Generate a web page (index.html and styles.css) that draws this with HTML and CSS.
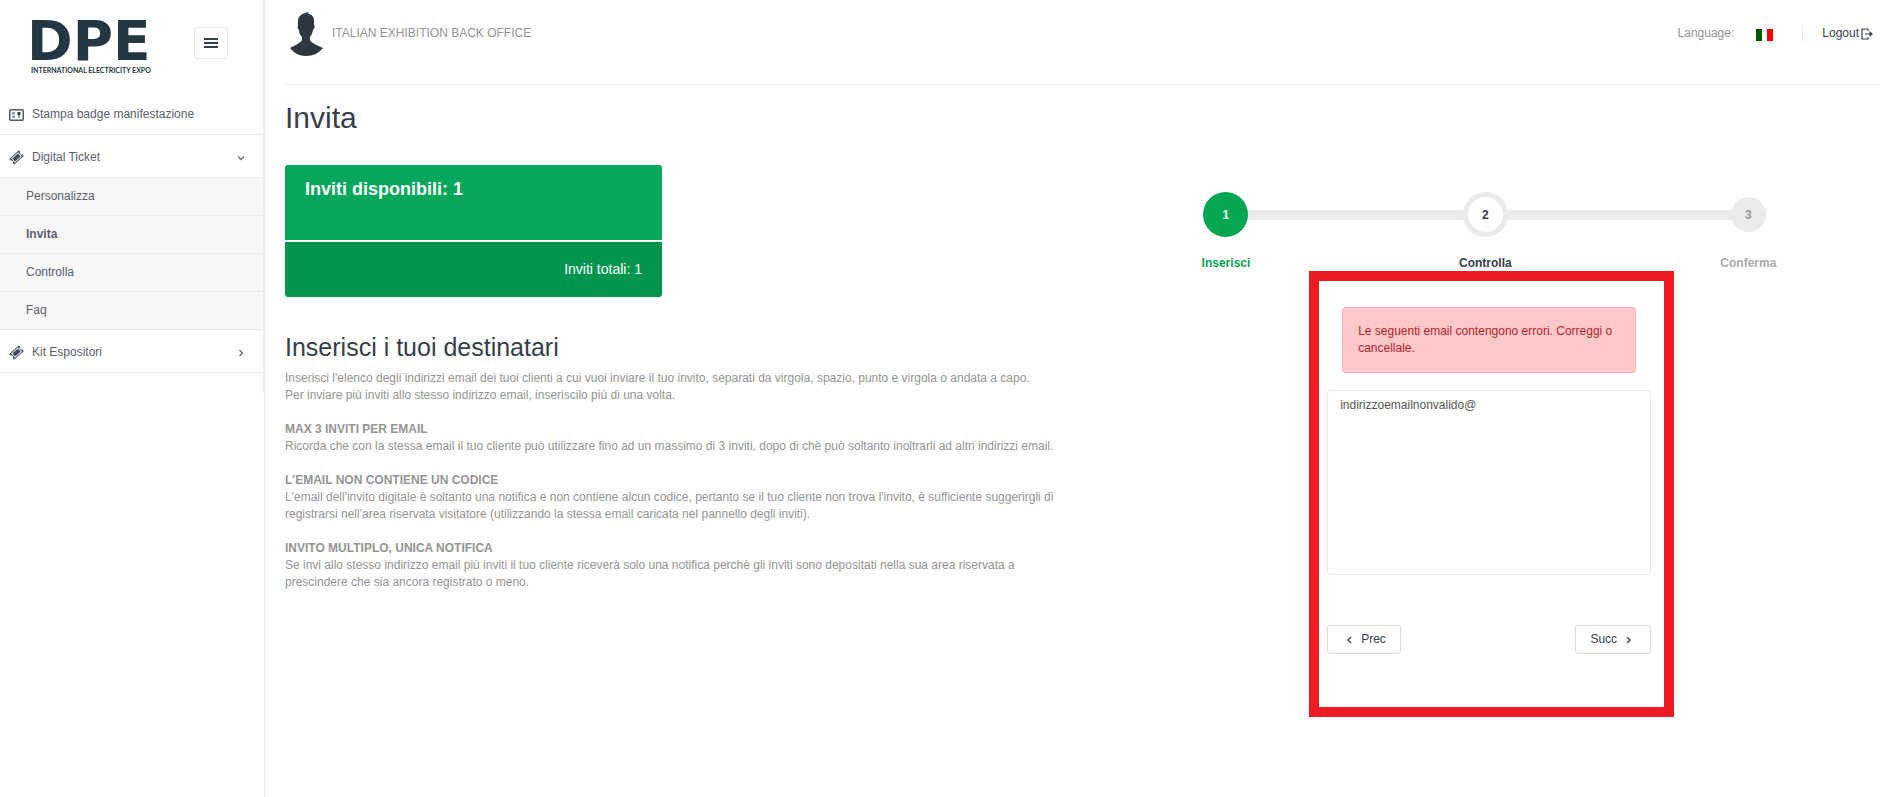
FILE: index.html
```html
<!DOCTYPE html>
<html lang="it">
<head>
  <meta charset="UTF-8">
  <meta name="viewport" content="width=device-width, initial-scale=1">
  <title>Invita</title>
  <link rel="stylesheet" href="styles.css">
</head>
<body>
  <aside class="sidebar">
    <div class="sidebar-inner">
      <div class="sidebar-header">
        <a href="#" class="logo">
          <span class="logo-name">DPE</span>
          <span class="logo-sub">INTERNATIONAL ELECTRICITY EXPO</span>
        </a>
        <button type="button" class="menu-toggle" aria-label="Menu">
          <svg width="14" height="11" viewBox="0 0 14 11"><path d="M0 1h14M0 5h14M0 9h14" stroke="#373e4a" stroke-width="2"/></svg>
        </button>
      </div>
      <nav>
        <ul class="menu">
          <li>
            <a href="#">
              <svg class="icon" width="15" height="12" viewBox="0 0 15 12">
                <rect x="0.750" y="0.750" width="13.500" height="10.500" rx="1" fill="none" stroke="#555a64" stroke-width="1.500"/>
                <path d="M3 3h3v2.500H3zM3 6.500h3V9H3z" fill="#9a9ea6"/>
                <path d="M8.500 3h3v3h-1v3h-1V6h-1z" fill="#373e4a"/>
              </svg>
              <span>Stampa badge manifestazione</span>
            </a>
          </li>
          <li>
            <a href="#">
              <svg class="icon" width="15" height="15" viewBox="0 0 16 16">
                <g transform="rotate(-42 8 8)">
                  <path d="M1 4h14v2.500a1.500 1.500 0 0 0 0 3V12H1V9.500a1.500 1.500 0 0 0 0-3z" fill="#555a64"/>
                  <rect x="3.500" y="5.500" width="9" height="5" fill="#444a55" stroke="#e6e7e9" stroke-width="1"/>
                </g>
              </svg>
              <span>Digital Ticket</span>
              <svg class="arrow" width="8" height="8" viewBox="0 0 8 8"><path d="M1 2.500l3 3 3-3" fill="none" stroke="#6b707a" stroke-width="1.300"/></svg>
            </a>
            <ul class="submenu">
              <li><a href="#">Personalizza</a></li>
              <li><a href="#" class="active">Invita</a></li>
              <li><a href="#">Controlla</a></li>
              <li><a href="#">Faq</a></li>
            </ul>
          </li>
          <li>
            <a href="#">
              <svg class="icon" width="15" height="15" viewBox="0 0 16 16">
                <g transform="rotate(-42 8 8)">
                  <path d="M1 4h14v2.500a1.500 1.500 0 0 0 0 3V12H1V9.500a1.500 1.500 0 0 0 0-3z" fill="#555a64"/>
                  <rect x="3.500" y="5.500" width="9" height="5" fill="#444a55" stroke="#e6e7e9" stroke-width="1"/>
                </g>
              </svg>
              <span>Kit Espositori</span>
              <svg class="arrow" width="8" height="8" viewBox="0 0 8 8"><path d="M2.500 1l3 3-3 3" fill="none" stroke="#6b707a" stroke-width="1.300"/></svg>
            </a>
          </li>
        </ul>
      </nav>
    </div>
  </aside>

  <main class="main">
    <header class="topbar">
      <div class="user">
        <svg width="33" height="44" viewBox="0 0 33 44">
          <path d="M19 0l-1 2c4 0 6 3 6 7v4c1 0 1 3-1 5-1 4-2 6-3 7v3c1 3 7 5 13 8-4 5-10 8-17 8S4 41 0 36c5-3 11-5 12-8v-3c-1-1-3-3-3-7-2-2-1-5-1-5V9c0-5 4-8 11-9z" fill="#303641"/>
        </svg>
        <span>ITALIAN EXHIBITION BACK OFFICE</span>
      </div>
      <div class="links">
        <span class="lang">Language:</span>
        <a href="#" class="flag" aria-label="Italiano">
          <svg width="17" height="12" viewBox="0 0 17 12"><path d="M0 0h6v12H0z" fill="#005700"/><path d="M11 0h6v12h-6z" fill="#fc0000"/></svg>
        </a>
        <a href="#" class="logout">Logout
          <svg width="12" height="12" viewBox="0 0 12 12"><path d="M7 3V1H1v10h6V9M4 6h6" fill="none" stroke="#373e4a" stroke-width="1.200"/><path d="M8.500 3L12 6 8.500 9z" fill="#373e4a"/></svg>
        </a>
      </div>
    </header>

    <h1>Invita</h1>

    <div class="columns">
      <section>
        <div class="stats">
          <div class="available">Inviti disponibili: 1</div>
          <div class="total">Inviti totali: 1</div>
        </div>

        <h2>Inserisci i tuoi destinatari</h2>
        <p>Inserisci l'elenco degli indirizzi email dei tuoi clienti a cui vuoi inviare il tuo invito, separati da virgola, spazio, punto e virgola o andata a capo.<br>
          Per inviare più inviti allo stesso indirizzo email, inseriscilo più di una volta.</p>
        <p><strong>MAX 3 INVITI PER EMAIL</strong><br>
          Ricorda che con la stessa email il tuo cliente può utilizzare fino ad un massimo di 3 inviti, dopo di chè può soltanto inoltrarli ad altri indirizzi email.</p>
        <p><strong>L'EMAIL NON CONTIENE UN CODICE</strong><br>
          L'email dell'invito digitale è soltanto una notifica e non contiene alcun codice, pertanto se il tuo cliente non trova l'invito, è sufficiente suggerirgli di registrarsi nell'area riservata visitatore (utilizzando la stessa email caricata nel pannello degli inviti).</p>
        <p><strong>INVITO MULTIPLO, UNICA NOTIFICA</strong><br>
          Se invi allo stesso indirizzo email più inviti il tuo cliente riceverà solo una notifica perchè gli inviti sono depositati nella sua area riservata a prescindere che sia ancora registrato o meno.</p>
      </section>

      <section class="wizard">
        <ol class="steps">
          <li class="completed"><span>1</span>Inserisci</li>
          <li class="current"><span>2</span>Controlla</li>
          <li><span>3</span>Conferma</li>
        </ol>

        <form class="panel">
          <div class="alert" role="alert">Le seguenti email contengono errori. Correggi o cancellale.</div>
          <textarea aria-label="Email" spellcheck="false">indirizzoemailnonvalido@</textarea>
          <div class="pager">
            <button type="button">
              <svg width="14" height="8" viewBox="0 0 14 8"><path d="M9 1L6 4l3 3" fill="none" stroke="#4a505b" stroke-width="1.500"/></svg>
              Prec
            </button>
            <button type="button">
              Succ
              <svg width="14" height="8" viewBox="0 0 14 8"><path d="M5 1l3 3-3 3" fill="none" stroke="#4a505b" stroke-width="1.500"/></svg>
            </button>
          </div>
        </form>
      </section>
    </div>
  </main>
</body>
</html>
```
FILE: styles.css
```css
* {
  box-sizing: border-box;
}
body {
  display: flex;
  min-height: 100vh;
  margin: 0;
  font-family: Arial, "Liberation Sans", sans-serif;
  font-size: 12px;
  line-height: 17px;
  color: #949494;
  background: #fff;
}
a {
  color: #5b606b;
  text-decoration: none;
}
ul, ol {
  margin: 0;
  padding: 0;
  list-style: none;
}
svg {
  flex: none;
}

/* sidebar */
.sidebar {
  flex: none;
  width: 265px;
  border-right: 1px solid #ebebeb;
}
.sidebar-inner {
  padding-bottom: 20px;
  border-right: 1px solid #ebebeb;
}
.sidebar-header {
  display: flex;
  justify-content: space-between;
  align-items: flex-start;
  height: 92px;
  padding: 16px 35px 0 31px;
}
.logo {
  display: flex;
  flex-direction: column;
  width: 116px;
  color: #233743;
}
.logo-name {
  margin-left: -4px;
  font-family: "DejaVu Sans", sans-serif;
  font-size: 55px;
  line-height: 50px;
  font-weight: bold;
}
.logo-sub {
  font-family: Lato, sans-serif;
  font-size: 7px;
  line-height: 8px;
  font-weight: bold;
  white-space: nowrap;
}
.menu-toggle {
  display: flex;
  align-items: center;
  justify-content: center;
  width: 34px;
  height: 32px;
  margin-top: 11px;
  padding: 0;
  border: 1px solid #ebebeb;
  border-radius: 3px;
  background: #fff;
}
.menu > li > a {
  display: flex;
  align-items: center;
  gap: 8px;
  height: 43px;
  padding: 3px 18px 0 9px;
  border-bottom: 1px solid #ebebeb;
}
.arrow {
  margin-left: auto;
}
.submenu a {
  display: flex;
  align-items: center;
  height: 38px;
  padding-left: 26px;
  border-bottom: 1px solid #ebebeb;
  background: #f7f7f7;
}
.submenu .active {
  font-weight: bold;
}

/* content */
.main {
  flex: 1;
  min-width: 0;
  padding: 0 5px 0 20px;
}
.topbar {
  display: flex;
  justify-content: space-between;
  align-items: flex-start;
  height: 85px;
  padding: 12px 7px 0 5px;
  border-bottom: 1px solid #efefef;
}
.user {
  display: flex;
  gap: 9px;
}
.user span {
  padding-top: 13px;
}
.links {
  display: flex;
  align-items: center;
  padding-top: 13px;
}
.flag {
  display: flex;
  margin: 2px 29px 0 22px;
}
.logout {
  display: flex;
  align-items: center;
  gap: 2px;
  padding-left: 19px;
  border-left: 1px solid #ebebeb;
  color: #373e4a;
}
h1, h2 {
  margin: 0;
  font-weight: normal;
  color: #373e4a;
}
h1 {
  padding: 16px 0 30px;
  font-size: 30px;
  line-height: 34px;
}
h2 {
  margin: 35px 0 8px;
  font-size: 25px;
  line-height: 30px;
}
p {
  margin: 0 0 17px;
}
.columns {
  display: grid;
  grid-template-columns: 775fr 783fr;
  gap: 39px;
}

/* invitation counters */
.stats {
  display: flex;
  flex-direction: column;
  gap: 2px;
  max-width: 377px;
  color: #fff;
}
.available {
  height: 75px;
  padding: 14px 20px;
  border-radius: 3px 3px 0 0;
  background: #04a75b;
  font-size: 18px;
  line-height: 20px;
  font-weight: bold;
}
.total {
  padding: 17px 20px 18px;
  border-radius: 0 0 3px 3px;
  background: #00954f;
  font-size: 14px;
  line-height: 20px;
  text-align: right;
}

/* wizard */
.wizard {
  padding-top: 27px;
}
.steps {
  display: flex;
  justify-content: space-between;
  width: 73.5%;
  margin: 0 auto;
  font-weight: bold;
  line-height: 16px;
  color: #aaa;
  background: linear-gradient(#ebebeb, #ebebeb) center 18px / calc(100% - 50px) 10px no-repeat;
}
.steps li {
  display: flex;
  flex-direction: column;
  align-items: center;
}
.steps span {
  display: flex;
  align-items: center;
  justify-content: center;
  width: 35px;
  height: 35px;
  margin: 5px 0 23px;
  border-radius: 50%;
  background: #ebebeb;
  color: #999;
}
.steps .completed span,
.steps .current span {
  width: 45px;
  height: 45px;
  margin: 0 0 18px;
}
.steps .completed {
  color: #04a651;
}
.steps .completed span {
  background: #04a651;
  color: #fff;
}
.steps .current {
  color: #373e4a;
}
.steps .current span {
  border: 5px solid #ebebeb;
  background: #fff;
  color: #373e4a;
}
.panel {
  width: 365px;
  margin-left: 27%;
  padding: 26px 13px 53px 8px;
  border: 10px solid #ed1c24;
}
.alert {
  margin: 0 15px 17px;
  padding: 15px;
  border: 1px solid #ffafbd;
  border-radius: 3px;
  background: #ffc9c9;
  color: #b5222c;
}
textarea {
  display: block;
  width: 100%;
  height: 185px;
  padding: 6px 12px;
  border: 1px solid #ebebeb;
  border-radius: 3px;
  font: inherit;
  color: #555;
  resize: none;
}
.pager {
  display: flex;
  justify-content: space-between;
  margin-top: 50px;
}
.pager button {
  display: flex;
  align-items: center;
  gap: 5px;
  padding: 5px 14px;
  border: 1px solid #dcdcdc;
  border-radius: 3px;
  background: #fff;
  font: inherit;
  color: #373e4a;
}
```
